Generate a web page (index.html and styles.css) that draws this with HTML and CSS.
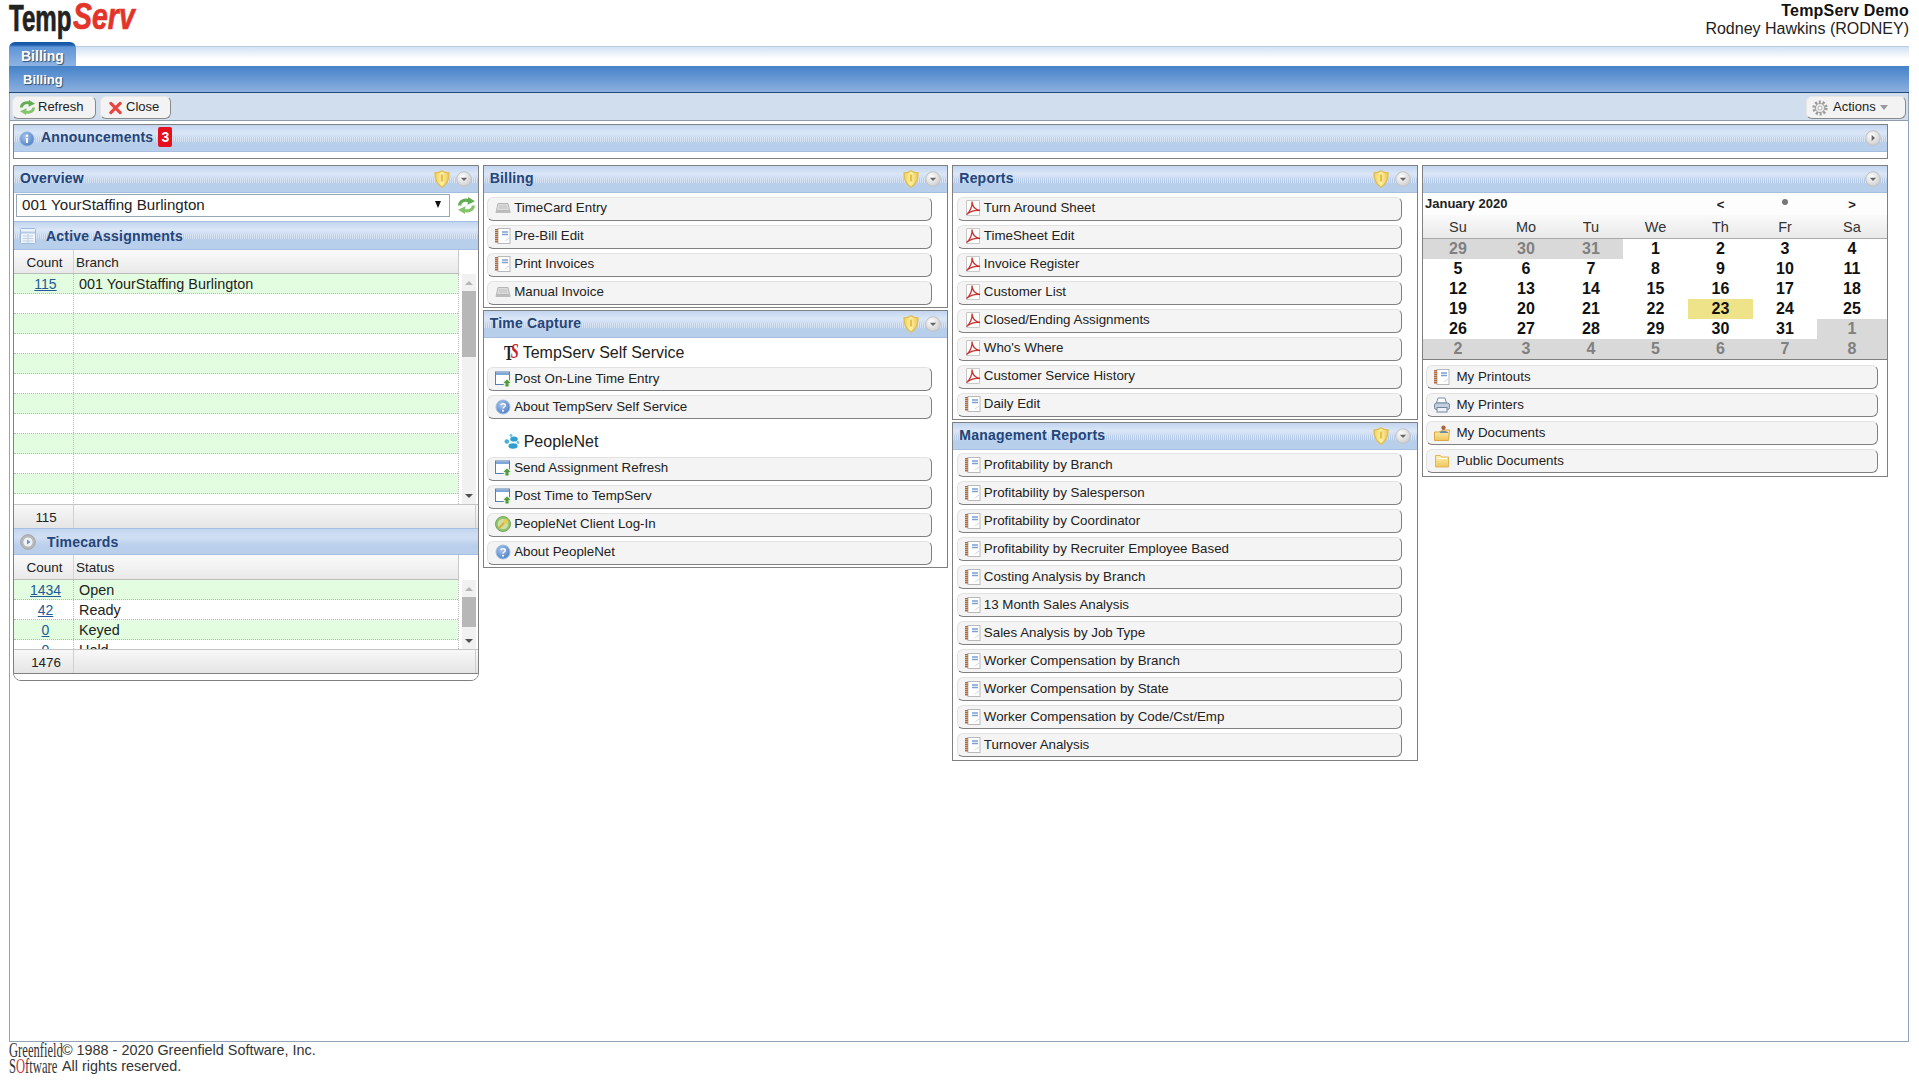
FILE: index.html
```html
<!DOCTYPE html>
<html lang="en">
<head>
<meta charset="utf-8">
<title>TempServ</title>
<link rel="stylesheet" href="styles.css">
</head>
<body>
<svg class="sprite" aria-hidden="true">
  <defs>
    <linearGradient id="gShield" x1="0" x2="1" y1="0" y2="0"><stop offset="0" stop-color="#f2cf55"/><stop offset=".5" stop-color="#fdf2a6"/><stop offset="1" stop-color="#eec64e"/></linearGradient>
    <radialGradient id="gBtn" cx=".4" cy=".35" r=".8"><stop offset="0" stop-color="#fff"/><stop offset="1" stop-color="#c4c4c4"/></radialGradient>
    <radialGradient id="gBlue" cx=".4" cy=".35" r=".8"><stop offset="0" stop-color="#a9c6ee"/><stop offset="1" stop-color="#3d73bd"/></radialGradient>
    <linearGradient id="gFolder" x1="0" x2="0" y1="0" y2="1"><stop offset="0" stop-color="#fdf1b0"/><stop offset="1" stop-color="#eec55c"/></linearGradient>
    <symbol id="i-shield" viewBox="0 0 16 18"><path d="M8 .8C6 2.400 3.400 3 1 3c0 6.500 2.200 11.500 7 14.200C12.800 14.500 15 9.500 15 3c-2.400 0-5-.6-7-2.200z" fill="url(#gShield)" stroke="#e2bd55" stroke-width="1.400"/><path d="M8 4.500v7" stroke="#e3c04e" stroke-width="2.200"/></symbol>
    <symbol id="i-down" viewBox="0 0 16 16"><circle cx="8" cy="8" r="7.300" fill="url(#gBtn)" stroke="#c2c2c2"/><path d="M4.800 6.800h6.400L8 10z" fill="#666"/></symbol>
    <symbol id="i-right" viewBox="0 0 16 16"><circle cx="8" cy="8" r="7.300" fill="url(#gBtn)" stroke="#c2c2c2"/><path d="M6.600 4.800v6.400L10 8z" fill="#666"/></symbol>
    <symbol id="i-refresh" viewBox="0 0 18 16"><path d="M2.500 8C2.500 4 7 1.800 12 3.500" fill="none" stroke="#62ad50" stroke-width="3"/><path d="M10.500 0l6.500 4-7 3.200z" fill="#62ad50"/><path d="M15.500 8c0 4-4.500 6.200-9.500 4.500" fill="none" stroke="#85c46a" stroke-width="3"/><path d="M7.500 16L1 12l7-3.200z" fill="#85c46a"/></symbol>
    <symbol id="i-close" viewBox="0 0 14 14"><path d="M2 2l10 10M12 2L2 12" stroke="#e8463f" stroke-width="3.400" stroke-linecap="round"/></symbol>
    <symbol id="i-info" viewBox="0 0 16 16"><circle cx="8" cy="8" r="7" fill="url(#gBlue)" stroke="#8fb0dc"/><path d="M8 7v5" stroke="#fff" stroke-width="2"/><circle cx="8" cy="4.700" r="1.200" fill="#fff"/></symbol>
    <symbol id="i-help" viewBox="0 0 16 16"><circle cx="8" cy="8" r="7" fill="url(#gBlue)" stroke="#a5bfe2"/><path d="M5.800 6.200C6 4.400 10.200 4.200 10.200 6.400 10.200 8 8 8 8 9.600" fill="none" stroke="#fff" stroke-width="1.500"/><circle cx="8" cy="11.800" r="1" fill="#fff"/></symbol>
    <symbol id="i-table" viewBox="0 0 16 16"><rect x=".5" y=".5" width="15" height="15" rx="1" fill="#eef4fb" stroke="#9db8da"/><path d="M1 4.500h14" stroke="#b5cbe6" stroke-width="2"/><path d="M3 8h10M3 10.500h10M3 13h10M8 6v9" stroke="#bed0e6"/></symbol>
    <symbol id="i-clock" viewBox="0 0 16 16"><circle cx="8" cy="8" r="7.300" fill="#b9b9b9" stroke="#a3a3a3"/><circle cx="8" cy="8" r="4.600" fill="#eef1f6"/><path d="M7 5.500v5L10.500 8z" fill="#6f8fc0"/></symbol>
    <symbol id="i-keys" viewBox="0 0 16 16"><path d="M3 3.500h10l1.500 7h-13z" fill="#dcdcdc" stroke="#b4b4b4"/><path d="M1 10.500h14.500v2.500H.5z" fill="#bdbdbd"/><path d="M4 6h8M4 8h8" stroke="#c2c2c2"/></symbol>
    <symbol id="i-note" viewBox="0 0 16 16"><rect x="3" y=".5" width="12" height="15" fill="#fff" stroke="#b9b9b9"/><path d="M1.500 1v14" stroke="#b06a3a" stroke-width="3" stroke-dasharray="1.400 .6"/><path d="M7 4h6M7 6.500h6" stroke="#7d9fd4" stroke-width="1.300"/><path d="M10 13l4-3" stroke="#cfd8e6"/></symbol>
    <symbol id="i-pdf" viewBox="0 0 16 16"><path d="M1.500.5h13v15h-13z" fill="#fff" stroke="#c9c9c9"/><path d="M1.500 14.500C5 12 7.600 6 7 1.500 6.600 6 10.500 10 15 10.500 10.500 10 5 11.500 1.500 14.500z" fill="none" stroke="#c9302c" stroke-width="1.300"/></symbol>
    <symbol id="i-win" viewBox="0 0 16 16"><rect x=".5" y="1" width="14" height="12.500" fill="#fff" stroke="#5c7ea8"/><rect x="1" y="1.500" width="13" height="2.500" fill="#7ea7da"/><circle cx="12" cy="12" r="3.500" fill="#dff0d4"/><path d="M12 8.500L15.500 12h-2v3.500h-3V12h-2z" fill="#4f9a3c"/></symbol>
    <symbol id="i-key" viewBox="0 0 16 16"><circle cx="8" cy="8" r="7.500" fill="#8fc26e" stroke="#78a85c"/><circle cx="8" cy="8" r="5.300" fill="#c9e1a5"/><circle cx="10.500" cy="5.500" r="2.400" fill="#f2c94c"/><path d="M9 7L4 12" stroke="#e0aa2c" stroke-width="2"/></symbol>
    <symbol id="i-print" viewBox="0 0 16 16"><path d="M4 1h7l1.500 5h-10z" fill="#fff" stroke="#7c8fa8"/><rect x=".5" y="6" width="15" height="6.500" rx="2" fill="#c4cfdd" stroke="#73869f"/><rect x="3" y="10.500" width="10" height="4.500" fill="#eef2f7" stroke="#73869f"/></symbol>
    <symbol id="i-userfolder" viewBox="0 0 16 16"><path d="M.5 7h4l5-2h6l-1 10.500H.5z" fill="url(#gFolder)" stroke="#d9a945"/><circle cx="9.500" cy="2.700" r="2.200" fill="#a8683a"/><path d="M5.500 8C6 5 13 5 14.500 8z" fill="#6f8aa8"/></symbol>
    <symbol id="i-folder" viewBox="0 0 16 16"><path d="M1.500 2.500h5l1 1.500h7v10h-13z" fill="url(#gFolder)" stroke="#dfb65c"/><path d="M3 5.500h10" stroke="#fff"/></symbol>
    <symbol id="i-gear" viewBox="0 0 16 16"><circle cx="8" cy="8" r="6" fill="none" stroke="#9c9c9c" stroke-width="3.200" stroke-dasharray="2 1.770"/><circle cx="8" cy="8" r="4.600" fill="#ececec" stroke="#a3a3a3"/><circle cx="8" cy="8" r="2" fill="#fafafa" stroke="#b5b5b5"/></symbol>
    <symbol id="i-pnet" viewBox="0 0 16 16"><ellipse cx="10" cy="5" rx="3.800" ry="2.600" fill="#2f9fd0"/><ellipse cx="9" cy="12" rx="4.600" ry="2.800" fill="#2f9fd0"/><circle cx="2.800" cy="7.500" r="2.300" fill="#3fb1dc"/><circle cx="7" cy="1.500" r="1.400" fill="#69c3e6"/><circle cx="14" cy="8.500" r="1.400" fill="#69c3e6"/></symbol>
  </defs>
</svg>

<div class="app">
  <header class="top">
    <div class="logo"><span class="logo-temp">Temp</span><span class="logo-serv">Serv</span></div>
    <div class="who"><div class="who-co">TempServ Demo</div><div>Rodney Hawkins (RODNEY)</div></div>
  </header>

  <div class="frame">
    <div class="tabs"><div class="tab">Billing</div><div class="tab-rest"></div></div>
    <div class="band">Billing</div>
    <div class="body">
      <div class="toolbar">
        <button class="tbtn tbtn-refresh"><svg class="ico-tool"><use href="#i-refresh"/></svg>Refresh</button>
        <button class="tbtn tbtn-close"><svg class="ico-x"><use href="#i-close"/></svg>Close</button>
        <button class="tbtn tbtn-actions"><svg class="ico-gear"><use href="#i-gear"/></svg>Actions<span class="caret"></span></button>
      </div>

      <div class="content">
        <section class="panel announce">
          <div class="phead phead-ann">
            <svg class="ico ann-ico"><use href="#i-info"/></svg>
            <span class="ptitle">Announcements</span>
            <span class="badge">3</span>
            <svg class="ctl ann-ctl"><use href="#i-right"/></svg>
          </div>
          <div class="ann-body"></div>
        </section>

        <div class="columns">
          <div class="col">
            <section class="panel panel-round">
              <div class="phead"><span class="ptitle">Overview</span><svg class="shield"><use href="#i-shield"/></svg><svg class="ctl"><use href="#i-down"/></svg></div>
              <div class="selrow">
                <div class="sel"><span>001 YourStaffing Burlington</span><span class="sel-arrow"></span></div>
                <svg class="sel-refresh"><use href="#i-refresh"/></svg>
              </div>
              <div class="phead phead-sub"><svg class="ico sub-ico"><use href="#i-table"/></svg><span class="ptitle">Active Assignments</span></div>
              <div class="ghead-wrap"><div class="ghead"><div class="gh gh-count">Count</div><div class="gh">Branch</div></div></div>
              <div class="gbody gbody-a">
                <div class="grows">
                  <div class="grow"><div class="gc-count"><a href="#">115</a></div><div class="gc-text">001 YourStaffing Burlington</div></div>
                  <div class="grow"><div class="gc-count"></div><div class="gc-text"></div></div>
                  <div class="grow"><div class="gc-count"></div><div class="gc-text"></div></div>
                  <div class="grow"><div class="gc-count"></div><div class="gc-text"></div></div>
                  <div class="grow"><div class="gc-count"></div><div class="gc-text"></div></div>
                  <div class="grow"><div class="gc-count"></div><div class="gc-text"></div></div>
                  <div class="grow"><div class="gc-count"></div><div class="gc-text"></div></div>
                  <div class="grow"><div class="gc-count"></div><div class="gc-text"></div></div>
                  <div class="grow"><div class="gc-count"></div><div class="gc-text"></div></div>
                  <div class="grow"><div class="gc-count"></div><div class="gc-text"></div></div>
                  <div class="grow"><div class="gc-count"></div><div class="gc-text"></div></div>
                  <div class="grow"><div class="gc-count"></div><div class="gc-text"></div></div>
                </div>
                <div class="scroll"><span class="arr arr-up"></span><span class="thumb thumb-a"></span><span class="arr arr-down"></span></div>
              </div>
              <div class="gfoot"><div class="gf-count">115</div><div class="gf-rest"></div></div>
              <div class="phead phead-sub phead-plain"><svg class="ico sub-ico clock-ico"><use href="#i-clock"/></svg><span class="ptitle">Timecards</span></div>
              <div class="ghead-wrap"><div class="ghead ghead-b"><div class="gh gh-count">Count</div><div class="gh">Status</div></div></div>
              <div class="gbody gbody-b">
                <div class="grows">
                  <div class="grow"><div class="gc-count"><a href="#">1434</a></div><div class="gc-text">Open</div></div>
                  <div class="grow"><div class="gc-count"><a href="#">42</a></div><div class="gc-text">Ready</div></div>
                  <div class="grow"><div class="gc-count"><a href="#">0</a></div><div class="gc-text">Keyed</div></div>
                  <div class="grow"><div class="gc-count"><a href="#">0</a></div><div class="gc-text">Hold</div></div>
                </div>
                <div class="scroll"><span class="arr arr-up"></span><span class="thumb thumb-b"></span><span class="arr arr-down"></span></div>
              </div>
              <div class="gfoot"><div class="gf-count">1476</div><div class="gf-rest"></div></div>
              <div class="round-end"></div>
            </section>
          </div>

          <div class="col">
            <section class="panel">
              <div class="phead"><span class="ptitle">Billing</span><svg class="shield"><use href="#i-shield"/></svg><svg class="ctl"><use href="#i-down"/></svg></div>
              <div class="list">
                <a class="btn" href="#"><svg class="ico"><use href="#i-keys"/></svg>TimeCard Entry</a>
                <a class="btn" href="#"><svg class="ico"><use href="#i-note"/></svg>Pre-Bill Edit</a>
                <a class="btn" href="#"><svg class="ico"><use href="#i-note"/></svg>Print Invoices</a>
                <a class="btn" href="#"><svg class="ico"><use href="#i-keys"/></svg>Manual Invoice</a>
              </div>
            </section>
            <section class="panel">
              <div class="phead"><span class="ptitle">Time Capture</span><svg class="shield"><use href="#i-shield"/></svg><svg class="ctl"><use href="#i-down"/></svg></div>
              <div class="brand"><span class="ts-logo"><span class="ts-t">T</span><span class="ts-s">S</span></span>TempServ Self Service</div>
              <div class="list list-flat">
                <a class="btn" href="#"><svg class="ico"><use href="#i-win"/></svg>Post On-Line Time Entry</a>
                <a class="btn" href="#"><svg class="ico"><use href="#i-help"/></svg>About TempServ Self Service</a>
              </div>
              <div class="brand brand-next"><svg class="pnet"><use href="#i-pnet"/></svg>PeopleNet</div>
              <div class="list list-end">
                <a class="btn" href="#"><svg class="ico"><use href="#i-win"/></svg>Send Assignment Refresh</a>
                <a class="btn" href="#"><svg class="ico"><use href="#i-win"/></svg>Post Time to TempServ</a>
                <a class="btn" href="#"><svg class="ico"><use href="#i-key"/></svg>PeopleNet Client Log-In</a>
                <a class="btn" href="#"><svg class="ico"><use href="#i-help"/></svg>About PeopleNet</a>
              </div>
            </section>
          </div>

          <div class="col">
            <section class="panel">
              <div class="phead"><span class="ptitle">Reports</span><svg class="shield"><use href="#i-shield"/></svg><svg class="ctl"><use href="#i-down"/></svg></div>
              <div class="list">
                <a class="btn" href="#"><svg class="ico"><use href="#i-pdf"/></svg>Turn Around Sheet</a>
                <a class="btn" href="#"><svg class="ico"><use href="#i-pdf"/></svg>TimeSheet Edit</a>
                <a class="btn" href="#"><svg class="ico"><use href="#i-pdf"/></svg>Invoice Register</a>
                <a class="btn" href="#"><svg class="ico"><use href="#i-pdf"/></svg>Customer List</a>
                <a class="btn" href="#"><svg class="ico"><use href="#i-pdf"/></svg>Closed/Ending Assignments</a>
                <a class="btn" href="#"><svg class="ico"><use href="#i-pdf"/></svg>Who's Where</a>
                <a class="btn" href="#"><svg class="ico"><use href="#i-pdf"/></svg>Customer Service History</a>
                <a class="btn" href="#"><svg class="ico"><use href="#i-note"/></svg>Daily Edit</a>
              </div>
            </section>
            <section class="panel">
              <div class="phead"><span class="ptitle">Management Reports</span><svg class="shield"><use href="#i-shield"/></svg><svg class="ctl"><use href="#i-down"/></svg></div>
              <div class="list list-mgmt">
                <a class="btn" href="#"><svg class="ico"><use href="#i-note"/></svg>Profitability by Branch</a>
                <a class="btn" href="#"><svg class="ico"><use href="#i-note"/></svg>Profitability by Salesperson</a>
                <a class="btn" href="#"><svg class="ico"><use href="#i-note"/></svg>Profitability by Coordinator</a>
                <a class="btn" href="#"><svg class="ico"><use href="#i-note"/></svg>Profitability by Recruiter Employee Based</a>
                <a class="btn" href="#"><svg class="ico"><use href="#i-note"/></svg>Costing Analysis by Branch</a>
                <a class="btn" href="#"><svg class="ico"><use href="#i-note"/></svg>13 Month Sales Analysis</a>
                <a class="btn" href="#"><svg class="ico"><use href="#i-note"/></svg>Sales Analysis by Job Type</a>
                <a class="btn" href="#"><svg class="ico"><use href="#i-note"/></svg>Worker Compensation by Branch</a>
                <a class="btn" href="#"><svg class="ico"><use href="#i-note"/></svg>Worker Compensation by State</a>
                <a class="btn" href="#"><svg class="ico"><use href="#i-note"/></svg>Worker Compensation by Code/Cst/Emp</a>
                <a class="btn" href="#"><svg class="ico"><use href="#i-note"/></svg>Turnover Analysis</a>
              </div>
            </section>
          </div>

          <div class="col">
            <section class="panel">
              <div class="phead"><svg class="ctl ctl-solo"><use href="#i-down"/></svg></div>
              <div class="cal">
                <div class="cal-title">January 2020</div><div class="cal-nav">&lt;</div><div class="cal-nav"><span class="cal-dot"></span></div><div class="cal-nav">&gt;</div>
                <div class="cal-h">Su</div><div class="cal-h">Mo</div><div class="cal-h">Tu</div><div class="cal-h">We</div><div class="cal-h">Th</div><div class="cal-h">Fr</div><div class="cal-h">Sa</div>
                <div class="d off">29</div><div class="d off">30</div><div class="d off">31</div><div class="d">1</div><div class="d">2</div><div class="d">3</div><div class="d">4</div>
                <div class="d">5</div><div class="d">6</div><div class="d">7</div><div class="d">8</div><div class="d">9</div><div class="d">10</div><div class="d">11</div>
                <div class="d">12</div><div class="d">13</div><div class="d">14</div><div class="d">15</div><div class="d">16</div><div class="d">17</div><div class="d">18</div>
                <div class="d">19</div><div class="d">20</div><div class="d">21</div><div class="d">22</div><div class="d today">23</div><div class="d">24</div><div class="d">25</div>
                <div class="d">26</div><div class="d">27</div><div class="d">28</div><div class="d">29</div><div class="d">30</div><div class="d">31</div><div class="d off">1</div>
                <div class="d off">2</div><div class="d off">3</div><div class="d off">4</div><div class="d off">5</div><div class="d off">6</div><div class="d off">7</div><div class="d off">8</div>
              </div>
              <div class="list list-side">
                <a class="btn" href="#"><svg class="ico"><use href="#i-note"/></svg>My Printouts</a>
                <a class="btn" href="#"><svg class="ico"><use href="#i-print"/></svg>My Printers</a>
                <a class="btn" href="#"><svg class="ico"><use href="#i-userfolder"/></svg>My Documents</a>
                <a class="btn" href="#"><svg class="ico"><use href="#i-folder"/></svg>Public Documents</a>
              </div>
            </section>
          </div>
        </div>
      </div>
    </div>
  </div>

  <footer class="foot">
    <div class="flogo"><span class="flogo-line">Greenfield</span><span class="flogo-line">S<span class="flogo-o">O</span>ftware</span></div>
    <div class="ftext"><div>&copy; 1988 - 2020 Greenfield Software, Inc.</div><div>All rights reserved.</div></div>
  </footer>
</div>
</body>
</html>
```

FILE: styles.css
```css
* { box-sizing: border-box; }
html, body { margin: 0; padding: 0; height: 100%; }
body {
  font-family: "Liberation Sans", Arial, sans-serif;
  font-size: 13.33px;
  color: #222;
  background: #fff;
  overflow: hidden;
}
.sprite { position: absolute; width: 0; height: 0; }
.app { height: 100vh; display: flex; flex-direction: column; }

/* top */
.top { height: 42px; flex: none; display: flex; justify-content: space-between; padding: 0 10px 0 9px; }
.logo { display: flex; height: 42px; white-space: nowrap; font-family: "Liberation Sans", sans-serif; font-weight: 700; line-height: 38px; }
.logo-temp { display: inline-block; width: 64px; font-size: 36px; color: #222; -webkit-text-stroke: .7px #222; transform: scaleX(.67); transform-origin: left; }
.logo-serv { display: inline-block; width: 62px; font-size: 37px; font-style: italic; color: #e2342b; -webkit-text-stroke: .7px #e2342b; transform: scaleX(.77); transform-origin: left; line-height: 34px; }
.who { text-align: right; font-size: 16px; line-height: 18px; padding-top: 2px; color: #222; }
.who-co { font-weight: 700; color: #111; letter-spacing: .2px; }

/* frame */
.frame { flex: 1; margin: 0 10px 0 9px; display: flex; flex-direction: column; min-height: 0; }
.tabs { height: 24px; display: flex; flex: none; }
.tab {
  width: 67px; border-radius: 6px 6px 0 0;
  background: linear-gradient(#15549f 0, #1d5fae 3px, #5f95d6 5px, #8eb3e2 100%);
  color: #fff; font-weight: 700; font-size: 14px; line-height: 28px; padding-left: 12px;
  text-shadow: 1px 1px 1px #35506f;
}
.tab-rest { flex: 1; margin-top: 4px; border-top: 1px solid #b9cde3; background: linear-gradient(#d2e2f3, #fff 12px); }
.band {
  height: 27px; flex: none; padding-left: 14px;
  background: linear-gradient(#4482c9, #8db0df);
  border-bottom: 1px solid #1f4a78;
  color: #fff; font-weight: 700; font-size: 13px; line-height: 28px;
  text-shadow: 1px 1px 1px #35506f;
}
.body { flex: 1; min-height: 0; display: flex; flex-direction: column; border: 1px solid #93a3b7; border-top: 0; }
.toolbar { height: 28px; flex: none; display: flex; gap: 4px; padding: 3px 2px 0; background: #d0deee; border-bottom: 1px solid #8e9cab; }
.tbtn {
  height: 23px; padding: 0 0 2px 7px; display: flex; align-items: center; gap: 3px;
  font: 13px "Liberation Sans", sans-serif; color: #222;
  background: #f3f3f3; border: 1px solid #e6e6e6; border-right-color: #8a8a8a; border-bottom-color: #8a8a8a; border-radius: 6px;
}
.tbtn-refresh { width: 84px; padding-left: 6px; }
.tbtn-close { width: 71px; }
.tbtn-actions { width: 100px; margin-left: auto; }
.ico-tool { width: 17px; height: 15px; margin-right: -1px; margin-top: 2px; }
.ico-x { width: 13px; height: 14px; margin-right: 1px; margin-left: 1px; margin-top: 2px; }
.ico-gear { width: 16px; height: 16px; margin-right: 2px; margin-left: -2px; margin-top: 2px; }
.caret { width: 0; height: 0; margin-left: 1px; margin-top: 2px; border: 4px solid transparent; border-top: 5px solid #999; border-bottom: 0; }

.content { padding: 3px 20px 0 3px; }

/* panels */
.panel { border: 1px solid #808080; background: #fff; }
.phead {
  height: 27px; display: flex; align-items: center; padding: 0 6px;
  border-bottom: 1px solid #a6bfe0;
  background:
    repeating-linear-gradient(90deg, rgba(255,255,255,.35) 0 1px, rgba(160,185,225,.35) 1px 2px) 0 12px / 100% 5px no-repeat,
    linear-gradient(#c2d5f0 0, #dbe7f7 8px, #c9daf2 13px, #b8cfec 18px, #b8cfec 100%);
}
.ptitle { font-size: 14px; font-weight: 700; color: #234579; letter-spacing: .2px; margin-top: -2px; }
.phead-sub .ptitle { margin-top: 0; }
.shield { width: 16px; height: 18px; margin-left: auto; margin-right: 6px; flex: none; }
.ctl { width: 16px; height: 16px; flex: none; }
.ctl-solo, .ann-ctl { margin-left: auto; }
.announce .phead { padding-left: 5px; }
.ann-ico { margin-right: 6px; }
.badge { margin-left: 5px; margin-top: -2px; width: 14px; height: 20px; background: #e60f1d; color: #fff; font-weight: 700; font-size: 14px; line-height: 20px; text-align: center; border-radius: 2px; }
.ann-body { height: 6px; }

.columns { display: grid; grid-template-columns: repeat(4, 1fr); gap: 4px; margin-top: 6px; align-items: start; }
.col { display: flex; flex-direction: column; gap: 2px; }

/* overview */
.panel-round { border-radius: 0 0 8px 8px; overflow: hidden; }
.selrow { height: 29px; display: flex; padding: 1px 0 0 2px; border-bottom: 1px solid #a6bfe0; background: #fff; }
.sel { width: 434px; height: 23px; border: 1px solid #9aa7b5; display: flex; justify-content: space-between; align-items: center; padding: 0 6px 2px 5px; font-size: 15.1px; color: #222; }
.sel-arrow { width: 0; height: 0; border: 3.5px solid transparent; border-top: 7px solid #111; border-bottom: 0; margin-right: 2px; }
.sel-refresh { width: 19px; height: 17px; margin: 3px 0 0 7px; flex: none; }
.phead-sub { height: 28px; }
.sub-ico { margin-right: 9px; }
.phead-sub .ptitle { margin-left: 1px; }
.clock-ico { width: 17px; height: 17px; }
.phead-plain { height: 27px; background: linear-gradient(#c3d6f0, #d1dff4 8px, #b9cfec 17px); border-top: 1px solid #a6bfe0; }
.phead-plain .ptitle { margin-left: 2px; }
.ghead-wrap { display: flex; background: #fff; }
.ghead { width: 445px; height: 24px; display: flex; border-right: 1px solid #c8c8c8; border-bottom: 1px solid #bcbcbc; background: linear-gradient(#fafafa, #e9e9e9); font-size: 13.5px; line-height: 25px; color: #222; }
.ghead-b { height: 25px; line-height: 26px; }
.gh { padding-left: 2px; }
.gh-count { width: 60px; padding: 0 0 0 2px; text-align: center; border-right: 1px solid #d4d4d4; }
.gbody { display: flex; overflow: hidden; }
.gbody-a { height: 230px; }
.gbody-b { height: 69px; }
.grows { width: 445px; flex: none; border-right: 1px dotted #bbb; }
.grow { height: 20px; display: flex; line-height: 21px; font-size: 14.4px; border-bottom: 1px dotted #b5b5b5; color: #222; }
.grow:nth-child(odd) { background: #e2fddf; }
.gc-count { width: 60px; padding-left: 4px; text-align: center; border-right: 1px dotted #bbb; font-size: 14px; }
.gc-count a { color: #235a96; }
.gc-text { padding-left: 5px; }
.scroll { flex: 1; margin: 0 2px 0 3px; background: #f1f1f1; display: flex; flex-direction: column; }
.arr { height: 17px; flex: none; display: flex; align-items: center; justify-content: center; }
.arr::before { content: ""; border: 4px solid transparent; }
.arr-up::before { border-bottom: 4px solid #b5b5b5; border-top: 0; }
.arr-down { margin-top: auto; }
.arr-down::before { border-top: 4px solid #505050; border-bottom: 0; }
.thumb { background: #b7b7b7; flex: none; }
.thumb-a { height: 66px; }
.thumb-b { height: 30px; }
.gfoot { height: 24px; display: flex; background: linear-gradient(#f8f8f8, #e5e5e5); border-top: 1px solid #c4c4c4; font-size: 13.33px; line-height: 25px; color: #222; }
.gf-count { width: 60px; text-align: center; padding-left: 5px; border-right: 1px solid #cfcfcf; }
.gf-rest { flex: 1; margin-right: 2px; border-right: 1px solid #cfcfcf; }
.round-end { height: 7px; border-top: 1px solid #808080; background: #fff; }

/* buttons */
.list { display: flex; flex-direction: column; gap: 4px; padding: 4px 15px 2px 3.5px; }
.list-flat { padding-top: 0; padding-bottom: 0; }
.list-end { padding-top: 0; }
.list-mgmt { padding-top: 3px; padding-bottom: 3px; }
.list-side { padding: 5px 9px 3px 3.5px; }
.btn {
  height: 24px; display: flex; align-items: center; gap: 3px; padding: 0 0 3px 7px;
  background: #f4f4f4; color: #222; font-size: 13.33px; text-decoration: none;
  border: 1px solid #e2e2e2; border-right-color: #808080; border-bottom-color: #808080; border-radius: 6px;
}
.list-flat .btn, .list-mgmt .btn, .list-side .btn { padding-bottom: 1px; }
.list-side .btn { gap: 6px; }
.ico { width: 16px; height: 16px; flex: none; margin-top: 1px; }
.brand { height: 29px; display: flex; align-items: center; padding-left: 39px; font-size: 16px; color: #222; }
.brand-next { height: 38px; padding-top: 8px; }
.ts-logo { width: 18px; margin-left: -19px; margin-right: 1px; font-family: "Liberation Serif", serif; font-weight: 700; font-size: 20px; line-height: 18px; display: flex; white-space: nowrap; transform: scaleX(.72); transform-origin: left; }
.ts-t { color: #222; }
.ts-s { color: #c7262b; font-style: italic; margin-left: -4px; margin-top: -2px; }
.pnet { width: 16px; height: 16px; margin-left: -19px; margin-right: 4px; }

/* calendar */
.cal { display: grid; grid-template-columns: 70px 66px 64px 65px 65px 64px 70px; border-bottom: 1px solid #808080; }
.cal-title { grid-column: span 4; height: 22px; padding-left: 2px; font-weight: 700; font-size: 13px; line-height: 22px; color: #222; background: #fdfdfd; }
.cal-nav { height: 22px; text-align: center; font-weight: 700; font-size: 13px; line-height: 24px; color: #222; background: #fdfdfd; }
.cal-dot { display: inline-block; width: 6px; height: 6px; border-radius: 50%; background: #777; vertical-align: 4px; }
.cal-h { height: 24px; text-align: center; font-size: 14.5px; line-height: 24px; color: #333; background: linear-gradient(#fafafa, #e9e9e9); border-bottom: 1px solid #aaa; }
.d { height: 20px; text-align: center; font-size: 16px; font-weight: 700; line-height: 20px; color: #111; }
.d.off { background: #d9d9d9; color: #808080; }
.d.today { background: #eee388; }

/* footer */
.foot { height: 38px; flex: none; display: flex; padding-left: 9px; }
.flogo { width: 53px; font-family: "Liberation Serif", serif; font-size: 21px; line-height: 16px; color: #333; }
.flogo-line { display: block; width: 53px; white-space: nowrap; transform: scaleX(.6); transform-origin: left; }
.flogo-o { color: #d6333a; }
.ftext { font-size: 14.4px; line-height: 16px; color: #333; }
```
